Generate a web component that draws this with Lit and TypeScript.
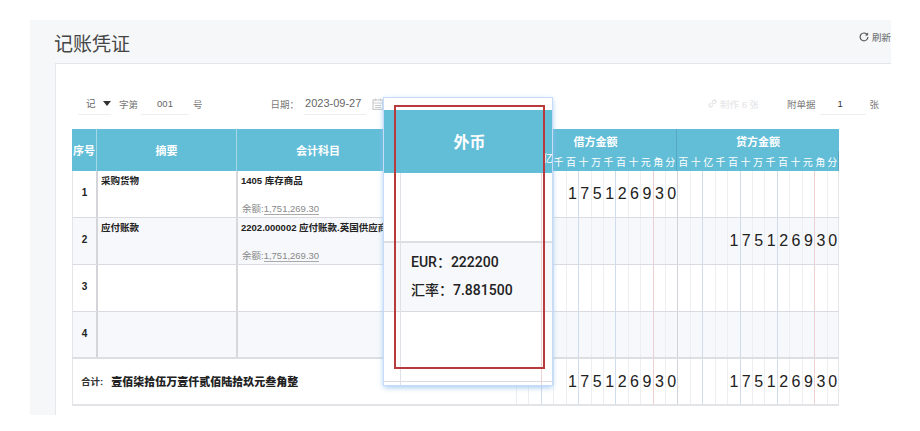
import { LitElement, html, css } from "lit";
import { customElement } from "lit/decorators.js";

const UNITS = ["百","十","亿","千","百","十","万","千","百","十","元","角","分"];
const AMOUNT = "175126930".split("");

interface Row { no: string; summary: string; account: string; balance: boolean; debit: boolean; credit: boolean; }
const ROWS: Row[] = [
  { no: "1", summary: "采购货物", account: "1405 库存商品", balance: true, debit: true, credit: false },
  { no: "2", summary: "应付账款", account: "2202.000002 应付账款.英国供应商", balance: true, debit: false, credit: true },
  { no: "3", summary: "", account: "", balance: false, debit: false, credit: false },
  { no: "4", summary: "", account: "", balance: false, debit: false, credit: false },
];

function lineClass(i: number): string {
  if (i === 11) return "red";
  if (i % 3 === 2) return "blue";
  return "";
}

@customElement("app-root")
export class AppRoot extends LitElement {
  static styles = css`
    :host {
      display: block;
      position: relative;
      width: 920px;
      height: 431px;
      overflow: hidden;
      background: #fff;
      font-family: "Liberation Sans", "Noto Sans CJK SC", sans-serif;
      color: #222;
    }
    .shell {
      margin: 20px 29px 0 30px;
      height: 395px;
      background: #f5f7f9;
      display: flex;
      flex-direction: column;
    }
    .head {
      height: 43px;
      flex: none;
      box-sizing: border-box;
      display: flex;
      align-items: center;
      justify-content: space-between;
      padding: 5px 0 0 24px;
    }
    .title { font-size: 19px; color: #444; line-height: 1; }
    .refresh { display: flex; align-items: center; gap: 3px; font-size: 9.5px; color: #666; margin-top: -14px; }
    .refresh svg { width: 10px; height: 10px; }
    .card {
      flex: 1;
      margin-left: 25px;
      background: #fff;
      border-left: 1px solid #e6e8ec;
      border-top: 1px solid #e3e5e9;
      padding-left: 16px;
      display: flex;
      flex-direction: column;
      min-height: 0;
    }
    .bar {
      height: 65px;
      flex: none;
      display: flex;
      align-items: center;
      font-size: 9.5px;
      color: #777;
      padding-top: 14px;
      box-sizing: border-box;
    }
    .under {
      border-bottom: 1px solid #eceef0;
      height: 22px;
      display: flex;
      align-items: center;
      color: #666;
    }
    .kind { width: 33px; margin-left: 6px; padding-left: 8px; box-sizing: border-box; gap: 7px; }
    .tri { width: 0; height: 0; border-left: 4.5px solid transparent; border-right: 4.5px solid transparent; border-top: 5px solid #333; }
    .t1 { margin-left: 8px; }
    .no { width: 48px; margin-left: 3px; justify-content: center; }
    .t2 { margin-left: 4px; }
    .t3 { margin-left: 68px; }
    .date { width: 62px; margin-left: 5px; padding-left: 1px; box-sizing: border-box; font-size: 11px; white-space: nowrap; }
    .cal { width: 12px; height: 12px; margin-left: 6px; flex: none; }
    .made { margin-left: 324px; color: #e2e4e6; display: flex; align-items: center; gap: 3px; width: 79px; white-space: nowrap; }
    .made svg { width: 9px; height: 9px; }
    .t4 { white-space: nowrap; }
    .qty { width: 46px; margin-left: 4px; padding-right: 5px; box-sizing: border-box; justify-content: center; color: #333; }
    .t5 { margin-left: 4px; }

    .table { width: 767px; flex: none; }
    .grid {
      display: grid;
      grid-template-columns: 25px 140px 163px 115px repeat(26, 1fr);
    }
    .thead {
      grid-template-rows: 22px 20px;
      background: #62bdd7;
      color: #fff;
      font-weight: 700;
    }
    .th {
      grid-row: span 2;
      display: flex;
      align-items: center;
      justify-content: center;
      font-size: 11px;
      border-right: 1px solid #a4d8e7;
    }
    .group {
      grid-column: span 13;
      display: flex;
      align-items: center;
      justify-content: center;
      font-size: 11px;
      padding-top: 2px;
    }
    .unit {
      display: flex;
      align-items: center;
      justify-content: center;
      font-size: 10px;
      font-weight: 400;
      white-space: nowrap;
    }
    .end { border-right: 1px solid #55a7c3; }
    .row { height: 47px; box-sizing: border-box; border-bottom: 1px solid #d9dbe0; border-left: 1px solid #e3e5e8; }
    .row.even { background: #f7f8fb; }
    .row.last { border-bottom: 2px solid #dcdee2; }
    .c { box-sizing: border-box; min-width: 0; overflow: hidden; }
    .c-no { display: flex; align-items: center; justify-content: center; padding-bottom: 3px; font-size: 10px; font-weight: 700; border-right: 2px solid #d3d5da; }
    .c-sum { font-size: 9.5px; font-weight: 700; padding: 4px 0 0 3px; border-right: 2px solid #d6d8dc; line-height: 12px; }
    .c-acc { padding: 4px 0 0 3px; font-size: 9.5px; font-weight: 700; line-height: 12px; white-space: nowrap; display: flex; flex-direction: column; }
    .bal { margin-top: 16px; margin-left: 1px; font-weight: 400; color: #888; font-size: 9.5px; }
    .bal span { border-bottom: 1px solid #aaa; }
    .d {
      border-left: 1px solid #eceef1;
      display: flex;
      align-items: center;
      justify-content: center;
      font-size: 16px;
      color: #222;
      overflow: visible;
    }
    .d.blue { border-left-color: #cfdcec; }
    .d.red { border-left-color: #eccfd0; }
    .d.major { border-left-color: #cfd2d8; }
    .d.edge { border-right: 1px solid #e4e6ea; }
    .total { border-left: 1px solid #e3e5e8; border-bottom: 2px solid #e2e4e7; height: 47px; box-sizing: border-box; }
    .total-label {
      grid-column: span 4;
      display: flex;
      align-items: center;
      padding: 0 0 2px 8px;
      font-size: 9.5px;
      font-weight: 700;
      color: #333;
      gap: 8px;
    }
    .total-label b { font-size: 11px; color: #222; }

    .popup {
      position: absolute;
      left: 384px;
      top: 98px;
      width: 168px;
      height: 287px;
      box-sizing: border-box;
      padding-top: 12px;
      background: #fff;
      box-shadow: 0 0 0 1px #c4dcf7, 0 2px 6px #93bff0;
      display: flex;
      flex-direction: column;
    }
    .popup::before {
      content: "";
      position: absolute;
      left: 16px;
      top: 12px;
      bottom: 0;
      width: 140px;
      border-left: 1px solid #dfe1e6;
      border-right: 1px solid #ecd2d2;
    }
    .p-head {
      height: 63px;
      flex: none;
      box-sizing: border-box;
      padding: 0 0 2px 3px;
      background: #62bdd7;
      color: #fff;
      font-size: 16px;
      font-weight: 700;
      display: flex;
      align-items: center;
      justify-content: center;
      position: relative;
      overflow: hidden;
    }
    .peek {
      position: absolute;
      right: -1px;
      top: 43px;
      font-size: 10px;
      font-weight: 400;
      line-height: 12px;
    }
    .p-a { height: 70px; flex: none; border-bottom: 2px solid #dcdee2; box-sizing: border-box; }
    .p-b {
      height: 69px;
      flex: none;
      box-sizing: border-box;
      background: #f7f8fb;
      border-bottom: 1px solid #d9dbe0;
      padding: 5px 0 0 27px;
      font-family: Roboto, "Noto Sans CJK SC", sans-serif;
      font-size: 14px;
      font-weight: 500;
      color: #222;
      line-height: 28px;
    }
    .p-c { height: 70px; flex: none; border-bottom: 1px solid #d9dbe0; box-sizing: border-box; }
    .mark {
      position: absolute;
      left: 394px;
      top: 105px;
      width: 151px;
      height: 264px;
      box-sizing: border-box;
      border: 2px solid #b93a3c;
      pointer-events: none;
    }
  `;

  private units(covered: number) {
    return UNITS.map(
      (u, i) => html`<div class="unit ${i === 12 ? "end" : ""}">${i < covered ? "" : u}</div>`
    );
  }

  private digits(show: boolean, major: boolean) {
    return UNITS.map((_, i) => {
      const digit = show && i >= 4 ? AMOUNT[i - 4] : "";
      return { i, digit, cls: `d ${lineClass(i)} ${major && i === 0 ? "major" : ""}` };
    });
  }

  private cells(debit: boolean, credit: boolean) {
    const cell = (show: boolean, major: boolean, edge: boolean) =>
      this.digits(show, major).map(
        (d) => html`<div class="c ${d.cls} ${edge && d.i === 12 ? "edge" : ""}">${d.digit}</div>`
      );
    return html`${cell(debit, false, false)}${cell(credit, true, true)}`;
  }

  render() {
    return html`
      <div class="shell">
        <header class="head">
          <div class="title">记账凭证</div>
          <div class="refresh">
            <svg viewBox="0 0 12 12" fill="none" stroke="#555" stroke-width="1.4">
              <path d="M10 3.4A4.7 4.7 0 1 0 10.7 6" />
              <path d="M10.4 1v2.8H7.6" stroke-width="1.1" />
            </svg>
            <span>刷新</span>
          </div>
        </header>
        <section class="card">
          <div class="bar">
            <div class="under kind"><span>记</span><i class="tri"></i></div>
            <span class="t1">字第</span>
            <div class="under no">001</div>
            <span class="t2">号</span>
            <span class="t3">日期：</span>
            <div class="under date">2023-09-27</div>
            <svg class="cal" viewBox="0 0 12 12" fill="none" stroke="#ccc" stroke-width="1.2">
              <rect x="1" y="2" width="10" height="9.4" />
              <path d="M1 5h10M3.5 0.5v2.5M8.5 0.5v2.5M3 7.5h6M3 9.5h6" />
            </svg>
            <div class="made">
              <svg viewBox="0 0 10 10" fill="none" stroke="#e2e4e6" stroke-width="1.4">
                <path d="M4 6l2-2M3 4.5L1.6 6a1.7 1.7 0 0 0 2.4 2.4L5.5 7M7 5.5L8.4 4A1.7 1.7 0 0 0 6 1.6L4.5 3" />
              </svg>
              <span>制作 6 张</span>
            </div>
            <span class="t4">附单据</span>
            <div class="under qty">1</div>
            <span class="t5">张</span>
          </div>

          <div class="table">
            <div class="grid thead">
              <div class="th">序号</div>
              <div class="th">摘要</div>
              <div class="th">会计科目</div>
              <div class="th"></div>
              <div class="group end">借方金额</div>
              <div class="group">贷方金额</div>
              ${this.units(3)}${this.units(0)}
            </div>
            ${ROWS.map(
              (r, idx) => html`
                <div class="grid row ${idx % 2 ? "even" : ""} ${idx === 3 ? "last" : ""}">
                  <div class="c c-no">${r.no}</div>
                  <div class="c c-sum">${r.summary}</div>
                  <div class="c c-acc">
                    <span>${r.account}</span>
                    ${r.balance ? html`<div class="bal">余额:<span>1,751,269.30</span></div>` : ""}
                  </div>
                  <div class="c"></div>
                  ${this.cells(r.debit, r.credit)}
                </div>
              `
            )}
            <div class="grid total">
              <div class="total-label"><span>合计:</span><b>壹佰柒拾伍万壹仟贰佰陆拾玖元叁角整</b></div>
              ${this.cells(true, true)}
            </div>
          </div>
        </section>
      </div>

      <aside class="popup">
        <div class="p-head">外币<span class="peek">亿</span></div>
        <div class="p-a"></div>
        <div class="p-b">
          <div>EUR：222200</div>
          <div>汇率：7.881500</div>
        </div>
        <div class="p-c"></div>
      </aside>
      <div class="mark"></div>
    `;
  }
}
